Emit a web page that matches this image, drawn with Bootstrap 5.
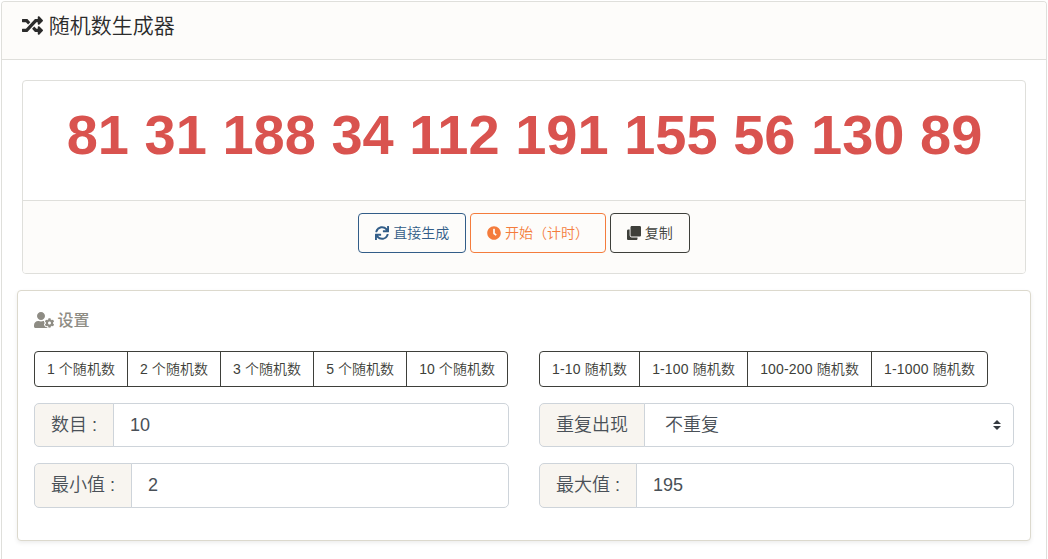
<!DOCTYPE html>
<html lang="zh-CN">
<head>
  <meta charset="UTF-8">
  <meta name="viewport" content="width=device-width, initial-scale=1.0">
  <title>随机数生成器</title>
  <link rel="stylesheet" href="https://cdn.jsdelivr.net/npm/bootstrap@5.3.0/dist/css/bootstrap.min.css">
  <style>
    body {
      font-family: "Liberation Sans", "Noto Sans CJK SC", sans-serif;
      font-size: 14px;
      font-weight: 350;
      color: #3e3f3a;
      background-color: #fff;
    }
    .icon {
      height: 1em;
      fill: currentColor;
      vertical-align: -0.125em;
    }
    .card {
      --bs-card-border-color: #dfdfdb;
      --bs-card-cap-bg: #fdfcfa;
      --bs-card-border-radius: 4px;
      --bs-card-inner-border-radius: 3px;
    }
    .tool-card {
      margin: 1px 1px 0;
      height: 558px;
    }
    .tool-header {
      height: 58px;
      padding: 9px 20px;
    }
    .tool-title {
      font-size: 21px;
      font-weight: 350;
      line-height: 30px;
      color: #2b2b2b;
    }
    .tool-body {
      padding: 20px 20px 0;
    }
    .result-body {
      height: 119px;
      padding: 20px 19px 20px 20px;
    }
    .result-numbers {
      font-size: 56px;
      line-height: 67px;
      color: #d9534f;
    }
    .result-footer {
      height: 73px;
      padding: 12px 20px;
    }
    .btn {
      --bs-btn-font-size: 14px;
      --bs-btn-font-weight: 350;
      --bs-btn-border-radius: 4px;
    }
    .result-footer .btn {
      height: 40px;
      padding: 8px 16px;
      line-height: 20px;
    }
    .btn-generate {
      --bs-btn-color: #325d88;
      --bs-btn-border-color: #325d88;
    }
    .btn-timer {
      --bs-btn-color: #f47c3c;
      --bs-btn-border-color: #f47c3c;
    }
    .btn-plain {
      --bs-btn-color: #3e3f3a;
      --bs-btn-border-color: #3e3f3a;
    }
    .settings-card {
      --bs-card-border-color: #dcd9cd;
      height: 251px;
      margin: 16px -5px 0;
      padding: 16px;
      box-shadow: 0 2px 4px rgba(0, 0, 0, .075);
    }
    .settings-title {
      height: 28px;
      margin-bottom: 16px;
      font-size: 16px;
      line-height: 28px;
      font-weight: 500;
      color: #8e8c84;
    }
    .settings-title .icon {
      margin-right: -1px;
    }
    .settings-grid {
      --bs-gutter-x: 30px;
    }
    .preset-group .btn {
      height: 36px;
      padding: 7px 12px;
      font-size: 14px;
      line-height: 20px;
      letter-spacing: .06px;
    }
    .range-group .btn {
      letter-spacing: .15px;
    }
    .field {
      height: 44px;
      margin-top: 16px;
    }
    .field-last {
      height: 45px;
    }
    .field .input-group-text,
    .field .form-control,
    .field .form-select {
      padding: 0 16px;
      font-size: 18px;
      font-weight: 350;
      color: #495057;
      border-color: #ced4da;
      border-radius: 5px;
    }
    .field .input-group-text {
      background-color: #f8f5f0;
      border-top-right-radius: 0;
      border-bottom-right-radius: 0;
    }
    .field .form-control,
    .field .form-select {
      border-top-left-radius: 0;
      border-bottom-left-radius: 0;
    }
    .field .form-select {
      padding-left: 20px;
      background: #fff url("data:image/svg+xml,%3csvg xmlns='http://www.w3.org/2000/svg' viewBox='0 0 4 5'%3e%3cpath fill='%23343a40' d='M2 0L0 2h4zm0 5L0 3h4z'/%3e%3c/svg%3e") no-repeat right 12px center / 8px 10px;
    }
  </style>
</head>
<body>
  <div class="card tool-card border-bottom-0 rounded-bottom-0">
    <div class="card-header tool-header flex-shrink-0">
      <h1 class="tool-title mb-0">
        <svg class="icon" viewBox="0 0 512 512"><path d="M504.971 359.029c9.373 9.373 9.373 24.569 0 33.941l-80 79.984c-15.01 15.01-40.971 4.49-40.971-16.971V416h-58.785a12.004 12.004 0 0 1-8.773-3.812l-70.556-75.596 53.333-57.143L352 336h32v-39.981c0-21.438 25.943-31.998 40.971-16.971l80 79.981zM12 176h84l52.781 56.551 53.333-57.143-70.556-75.596A11.999 11.999 0 0 0 122.785 96H12c-6.627 0-12 5.373-12 12v56c0 6.627 5.373 12 12 12zm372 0v39.984c0 21.46 25.961 31.98 40.971 16.971l80-79.984c9.373-9.373 9.373-24.569 0-33.941l-80-79.981C409.943 24.021 384 34.582 384 56.019V96h-58.785a12.004 12.004 0 0 0-8.773 3.812L96 336H12c-6.627 0-12 5.373-12 12v56c0 6.627 5.373 12 12 12h110.785c3.326 0 6.503-1.381 8.773-3.812L352 176h32z"/></svg>
        随机数生成器
      </h1>
    </div>
    <div class="card-body tool-body">
      <div class="card text-center">
        <div class="card-body result-body">
          <div class="result-numbers fw-bold text-nowrap" id="result">81 31 188 34 112 191 155 56 130 89</div>
        </div>
        <div class="card-footer result-footer">
          <button type="button" class="btn btn-generate">
            <svg class="icon" viewBox="0 0 512 512"><path d="M440.65 12.57l4 82.77A247.16 247.16 0 0 0 255.83 8C134.73 8 33.91 94.92 12.29 209.82A12 12 0 0 0 24.09 224h49.05a12 12 0 0 0 11.67-9.26 175.91 175.91 0 0 1 317-56.94l-101.46-4.86a12 12 0 0 0-12.57 12v47.41a12 12 0 0 0 12 12H500a12 12 0 0 0 12-12V12a12 12 0 0 0-12-12h-47.37a12 12 0 0 0-11.98 12.57zM255.83 432a175.61 175.61 0 0 1-146-77.8l101.8 4.87a12 12 0 0 0 12.57-12v-47.4a12 12 0 0 0-12-12H12a12 12 0 0 0-12 12V500a12 12 0 0 0 12 12h47.35a12 12 0 0 0 12-12.6l-4.15-82.57A247.17 247.17 0 0 0 255.83 504c121.11 0 221.93-86.92 243.55-201.82a12 12 0 0 0-11.8-14.18h-49.05a12 12 0 0 0-11.67 9.26A175.86 175.86 0 0 1 255.83 432z"/></svg>
            直接生成</button>
          <button type="button" class="btn btn-timer">
            <svg class="icon" viewBox="0 0 512 512"><path d="M256,8C119,8,8,119,8,256S119,504,256,504,504,393,504,256,393,8,256,8Zm92.49,313h0l-20,25a16,16,0,0,1-22.49,2.5h0l-67-49.72a40,40,0,0,1-15-31.23V112a16,16,0,0,1,16-16h32a16,16,0,0,1,16,16V256l58,42.5A16,16,0,0,1,348.49,321Z"/></svg>
            开始（计时）</button>
          <button type="button" class="btn btn-plain">
            <svg class="icon" viewBox="0 0 512 512"><path d="M464 0c26.51 0 48 21.49 48 48v288c0 26.51-21.49 48-48 48H176c-26.51 0-48-21.49-48-48V48c0-26.51 21.49-48 48-48h288M176 416c-44.112 0-80-35.888-80-80V128H48c-26.51 0-48 21.49-48 48v288c0 26.51 21.49 48 48 48h288c26.51 0 48-21.49 48-48v-48H176z"/></svg>
            复制</button>
        </div>
      </div>

      <div class="card settings-card">
        <h2 class="settings-title">
          <svg class="icon" viewBox="0 0 640 512"><path d="M610.5 373.3c2.6-14.1 2.6-28.5 0-42.6l25.8-14.9c3-1.7 4.3-5.2 3.3-8.5-6.7-21.6-18.2-41.2-33.2-57.4-2.3-2.5-6-3.1-9-1.4l-25.8 14.9c-10.9-9.3-23.4-16.5-36.9-21.3v-29.8c0-3.4-2.4-6.4-5.7-7.1-22.3-5-45-4.8-66.2 0-3.3.7-5.7 3.7-5.7 7.1v29.8c-13.5 4.8-26 12-36.9 21.3l-25.8-14.9c-2.9-1.7-6.7-1.1-9 1.4-15 16.2-26.5 35.8-33.2 57.4-1 3.3.4 6.8 3.3 8.5l25.8 14.9c-2.6 14.1-2.6 28.5 0 42.6l-25.8 14.9c-3 1.7-4.3 5.2-3.3 8.5 6.7 21.6 18.2 41.1 33.2 57.4 2.3 2.5 6 3.1 9 1.4l25.8-14.9c10.9 9.3 23.4 16.5 36.9 21.3v29.8c0 3.4 2.4 6.4 5.7 7.1 22.3 5 45 4.8 66.2 0 3.3-.7 5.7-3.7 5.7-7.1v-29.8c13.5-4.8 26-12 36.9-21.3l25.8 14.9c2.9 1.7 6.7 1.1 9-1.4 15-16.2 26.5-35.8 33.2-57.4 1-3.3-.4-6.8-3.3-8.5l-25.8-14.9zM496 400.5c-26.8 0-48.5-21.8-48.5-48.5s21.8-48.5 48.5-48.5 48.5 21.8 48.5 48.5-21.7 48.5-48.5 48.5zM224 256c70.7 0 128-57.3 128-128S294.7 0 224 0 96 57.3 96 128s57.3 128 128 128zm201.2 226.5c-2.3-1.2-4.6-2.6-6.8-3.9l-7.9 4.6c-6 3.4-12.8 5.3-19.6 5.3-10.9 0-21.4-4.6-28.9-12.6-18.3-19.8-32.3-43.9-40.2-69.6-5.5-17.7 1.9-36.4 17.9-45.7l7.9-4.6c-.1-2.6-.1-5.2 0-7.8l-7.9-4.6c-16-9.2-23.4-28-17.9-45.7.9-2.9 2.2-5.8 3.2-8.7-3.8-.3-7.5-1.2-11.4-1.2h-16.7c-22.2 10.2-46.9 16-72.9 16s-50.6-5.8-72.9-16h-16.7C60.2 288 0 348.2 0 422.4V464c0 26.5 21.5 48 48 48h352c10.1 0 19.5-3.2 27.2-8.5-1.2-3.8-2-7.7-2-11.8v-9.2z"/></svg>
          设置
        </h2>
        <div class="row settings-grid">
          <div class="col-6">
            <div class="btn-group preset-group">
              <button type="button" class="btn btn-plain">1 个随机数</button>
              <button type="button" class="btn btn-plain">2 个随机数</button>
              <button type="button" class="btn btn-plain">3 个随机数</button>
              <button type="button" class="btn btn-plain">5 个随机数</button>
              <button type="button" class="btn btn-plain">10 个随机数</button>
            </div>
            <div class="input-group field">
              <span class="input-group-text">数目 :</span>
              <input type="text" class="form-control" id="count" value="10">
            </div>
            <div class="input-group field field-last">
              <span class="input-group-text">最小值 :</span>
              <input type="text" class="form-control" id="min" value="2">
            </div>
          </div>
          <div class="col-6">
            <div class="btn-group preset-group range-group">
              <button type="button" class="btn btn-plain">1-10 随机数</button>
              <button type="button" class="btn btn-plain">1-100 随机数</button>
              <button type="button" class="btn btn-plain">100-200 随机数</button>
              <button type="button" class="btn btn-plain">1-1000 随机数</button>
            </div>
            <div class="input-group field">
              <label class="input-group-text" for="repeat">重复出现</label>
              <select class="form-select" id="repeat">
                <option selected>不重复</option>
                <option>可重复</option>
              </select>
            </div>
            <div class="input-group field field-last">
              <span class="input-group-text">最大值 :</span>
              <input type="text" class="form-control" id="max" value="195">
            </div>
          </div>
        </div>
      </div>
    </div>
  </div>
  <script src="https://cdn.jsdelivr.net/npm/bootstrap@5.3.0/dist/js/bootstrap.bundle.min.js"></script>
</body>
</html>
